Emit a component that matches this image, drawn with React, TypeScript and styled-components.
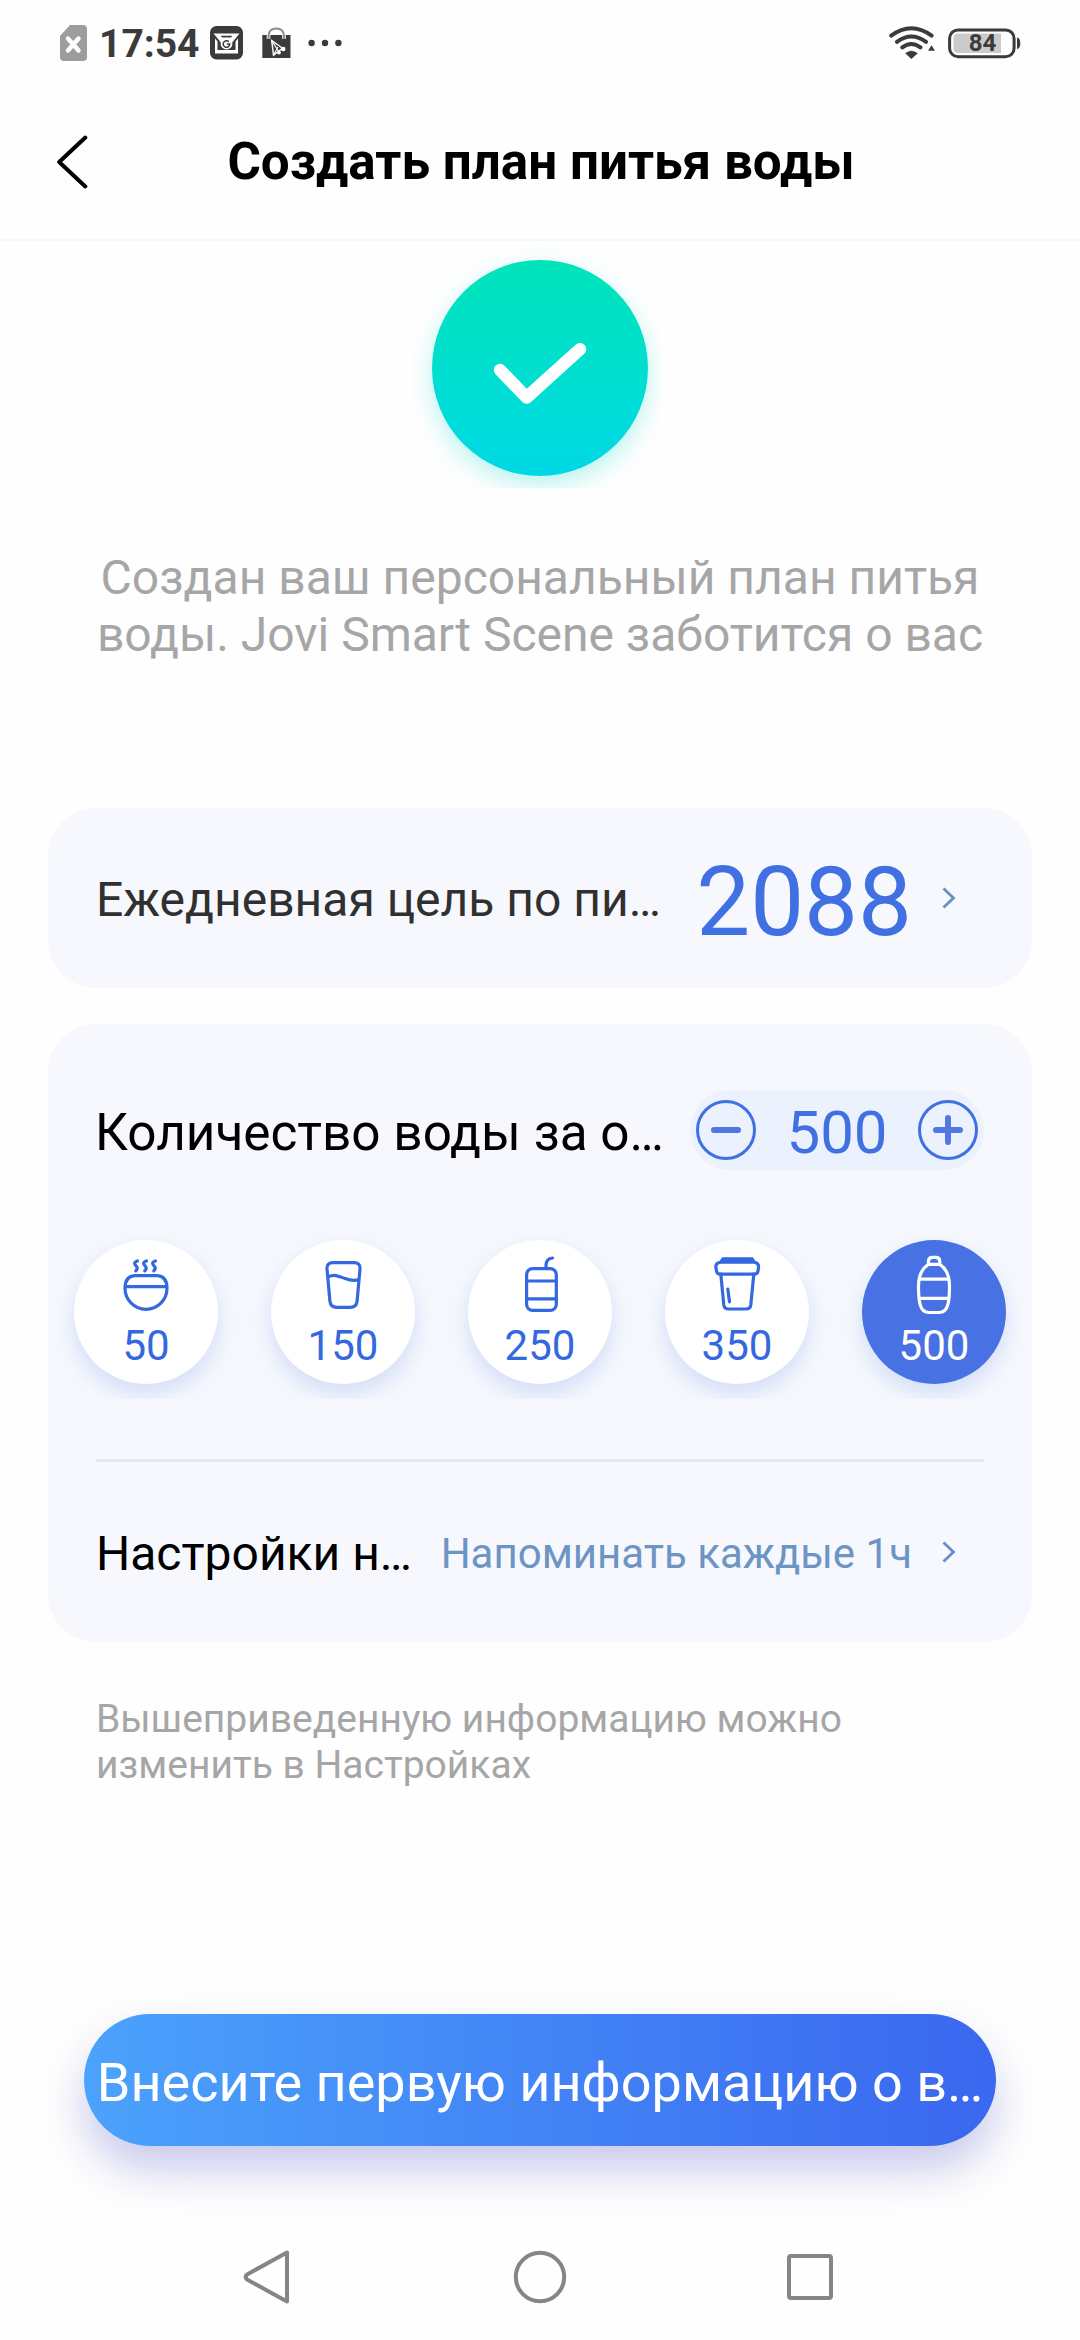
import React from 'react';
import styled, { createGlobalStyle } from 'styled-components';

const GlobalStyle = createGlobalStyle`
  *, *::before, *::after { box-sizing: border-box; }
  body { margin: 0; background: #fefefe; }
  button { font: inherit; border: 0; padding: 0; background: none; color: inherit; }
  svg { display: block; flex: none; }
`;

const blue = '#4070e2';
const ink = '#3b3b3b';

const Screen = styled.div`
  width: 1080px;
  height: 2340px;
  display: flex;
  flex-direction: column;
  overflow: hidden;
  background: #fefefe;
  font-family: Roboto, "Noto Sans", sans-serif;
`;

const StatusBar = styled.div`
  height: 86px;
  padding: 0 59px 0 60px;
  display: flex;
  justify-content: space-between;
  align-items: center;
  color: ${ink};
`;

const StatusGroup = styled.div<{ $gap: number }>`
  display: flex;
  align-items: center;
  gap: ${p => p.$gap}px;
`;

const Clock = styled.span`
  width: 98px;
  font-size: 39px;
  line-height: 44px;
  font-weight: 700;
  margin: 2px 12px 0 11px;
`;

const Header = styled.header`
  height: 155px;
  padding: 0 56px 2px;
  display: grid;
  grid-template-columns: 60px 1fr 60px;
  align-items: center;
  border-bottom: 2px solid #f7f7f7;
`;

const Title = styled.h1`
  margin: 0;
  padding-left: 2px;
  text-align: center;
  font-size: 51.2px;
  line-height: 60px;
  font-weight: 700;
  color: #000;
  white-space: nowrap;
`;

const Hero = styled.section`
  display: flex;
  flex-direction: column;
  align-items: center;
  padding-top: 19px;
  height: 567px;
`;

const Badge = styled.div`
  width: 216px;
  height: 216px;
  border-radius: 50%;
  display: grid;
  place-items: center;
  background: linear-gradient(180deg, #00e4b9, #00dfcf 50%, #00d8e6);
  box-shadow: 0 9px 24px rgba(0, 218, 205, 0.28);
  clip-path: inset(-20px -12px -12px -20px);
`;

const Lead = styled.p`
  margin: 73px 0 0;
  text-align: center;
  font-size: 48px;
  line-height: 57px;
  color: #a6a6a6;
`;

const Cards = styled.main`
  display: flex;
  flex-direction: column;
  gap: 36px;
  padding: 0 48px;
`;

const Card = styled.section`
  border-radius: 48px;
  background: #f6f8fd;
  padding: 0 48px;
`;

const Row = styled.div<{ $height: number; $end?: number }>`
  height: ${p => p.$height}px;
  padding-right: ${p => p.$end ?? 0}px;
  display: flex;
  align-items: center;
  justify-content: space-between;
`;

const Label = styled.span<{ $size?: number; $color?: string; $drop?: number }>`
  font-size: ${p => p.$size ?? 48}px;
  line-height: 60px;
  margin-top: ${p => p.$drop ?? 3}px;
  margin-left: ${p => (p.$size ? -1 : 0)}px;
  color: ${p => p.$color ?? '#000'};
  white-space: nowrap;
`;

const Detail = styled.div<{ $gap: number }>`
  display: flex;
  align-items: center;
  gap: ${p => p.$gap}px;
`;

const Goal = styled.span`
  margin-top: 8px;
  font-size: 96px;
  line-height: 100px;
  color: ${blue};
`;

const Interval = styled.span`
  margin-top: 3px;
  font-size: 42px;
  line-height: 50px;
  color: #6d95c4;
  white-space: nowrap;
`;

const Stepper = styled.div`
  width: 294px;
  height: 80px;
  padding: 0 6px;
  border-radius: 40px;
  background: #ecf2fd;
  display: flex;
  align-items: center;
  justify-content: space-between;
`;

const StepButton = styled.button`
  width: 60px;
  height: 60px;
  border: 3px solid ${blue};
  border-radius: 50%;
  display: grid;
  place-items: center;
`;

const StepValue = styled.span`
  margin-top: 5px;
  font-size: 60px;
  line-height: 70px;
  color: ${blue};
`;

const Sizes = styled.div`
  display: flex;
  justify-content: space-between;
  margin: 4px -22px 0;
`;

const Size = styled.button<{ $active: boolean }>`
  width: 144px;
  height: 144px;
  padding-top: 12px;
  border-radius: 50%;
  display: flex;
  flex-direction: column;
  align-items: center;
  gap: 8px;
  background: ${p => (p.$active ? '#4871e3' : '#fff')};
  color: ${p => (p.$active ? '#fff' : '#3368df')};
  box-shadow: 0 10px 22px rgba(72, 113, 227, 0.2);
  clip-path: inset(-20px -25px -15px -25px);
`;

const SizeValue = styled.span`
  font-size: 42px;
  line-height: 44px;
`;

const Divider = styled.hr`
  height: 3px;
  margin: 75px 0 0;
  border: 0;
  background: #dfebf9;
`;

const Note = styled.p`
  margin: 54px 0 0;
  padding: 0 96px;
  font-size: 39px;
  line-height: 46px;
  color: #a6a6a6;
`;

const Submit = styled.button`
  width: 912px;
  height: 132px;
  margin: auto auto 0;
  padding-top: 5px;
  border-radius: 66px;
  background: linear-gradient(90deg, #4ba2fc, #3a67ef);
  box-shadow: 0 24px 44px rgba(82, 82, 200, 0.3);
  color: #fff;
  font-size: 54px;
  line-height: 64px;
  white-space: nowrap;
`;

const NavBar = styled.nav`
  height: 194px;
  padding: 102px 240px 0;
  display: flex;
  justify-content: space-between;
`;

const Bowl = () => (
  <>
    <path d="M18.5 23.6H41.5Q51 24.3 51 36.3A21 21 0 0 1 9 36.3Q9 24.3 18.5 23.6ZM9 34.7H51" />
    <path d="M21.4 9C17.2 10.5 18.6 12.6 20.2 14C22 16 21 17.6 19.8 18.8M30.4 9C26.2 10.5 27.6 12.6 29.2 14C31 16 30 17.6 28.8 18.8M39.4 9C35.2 10.5 36.6 12.6 38.2 14C40 16 39 17.6 37.8 18.8" />
  </>
);
const Glass = () => (
  <path d="M20 10.7H41Q47.6 10.7 47 17L44.1 49Q43.4 55.3 37.5 55.3H23.5Q17.6 55.3 16.9 49L14 17Q13.4 10.7 20 10.7ZM15 25C22 21.5 27 24.8 32 26.6S41 29.4 46 27.6" />
);
const Can = () => (
  <>
    <rect x="16.6" y="16.6" width="29.7" height="41.8" rx="6" />
    <path d="M16.6 29H46.3M16.6 46.8H46.3M36 16V13.5Q36.2 6.4 42.6 6" />
  </>
);
const Cup = () => (
  <>
    <path d="M15.5 6H45.5L48 10H13Z" fill="currentColor" strokeWidth="1.5" />
    <path d="M14 10.2H46.5Q51.8 10.8 51.6 15L51 19Q50.5 22.2 47 22.2H13.5Q10 22.2 9.5 19L8.8 15Q8.6 10.8 14 10.2Z" />
    <path d="M13.8 22.2L16.8 53Q17.4 57 21.5 57H39Q43.2 57 43.8 53L46.8 22.2M20.8 37L22.5 49.8" />
  </>
);
const Bottle = () => (
  <path d="M24.4 12.4V9.5Q24.4 5.4 28.4 5.4H31.8Q35.8 5.4 35.8 9.5V12.4ZM24.4 12.4C17.2 17 14.5 25 14.5 34C14.5 42 15 48 16 52.2Q18 60.5 25 60.5H35Q42 60.5 44 52.2C45 48 45.5 42 45.5 34C45.5 25 43 17 35.8 12.4M15.4 27.2H44.6M15.2 46.3H44.8" />
);

const sizes = [
  { value: 50, Icon: Bowl },
  { value: 150, Icon: Glass },
  { value: 250, Icon: Can },
  { value: 350, Icon: Cup },
  { value: 500, Icon: Bottle },
];

const Chevron = () => (
  <svg width="14" height="22" viewBox="0 0 14 22" fill="none" stroke="#6291c6" strokeWidth="2.8">
    <path d="M1.5 1.5L11.5 11L1.5 20.5" />
  </svg>
);

const SimIcon = () => (
  <svg width="27" height="36" viewBox="0 0 27 36">
    <path d="M10 0H23Q27 0 27 4V32Q27 36 23 36H4Q0 36 0 32V11Z" fill="#9d9d9d" />
    <path d="M8 13.5L18.5 25.5M18.5 13.5L8 25.5" stroke="#fff" strokeWidth="4.4" strokeLinecap="round" />
  </svg>
);
const MailIcon = () => (
  <svg width="33" height="34" viewBox="0 0 33 34">
    <rect width="33" height="33.5" rx="6.5" fill={ink} />
    <path d="M4 7.5H29L24.5 14H26V24H28V27.5H5V14L4 12Z" fill="none" />
    <path d="M3.5 7.5H29.5L20.5 18.5H12.5Z" fill="#fff" />
    <path d="M5 12.5L7.5 15.5V24H25.5V15.5L28 12.5V27.5H5Z" fill="#fff" />
    <path d="M10.5 9.8H22.5L20.8 11.6H12.2Z" fill={ink} />
    <circle cx="16.5" cy="17.7" r="5.9" fill="#fff" />
    <path d="M18.8 15.6A3.3 3.3 0 1 0 19.8 18H16.8" fill="none" stroke={ink} strokeWidth="1.5" />
  </svg>
);
const BagIcon = () => (
  <svg width="29" height="32" viewBox="0 0 29 32">
    <path d="M0.3 8H28.5V31H0.3Z" fill={ink} />
    <path d="M6.5 12V9Q7 1.6 14.3 1.6T22 9V12" fill="none" stroke="#fff" strokeWidth="3.6" />
    <path d="M6.5 12V9Q7 1.6 14.3 1.6T22 9V12" fill="none" stroke="#8d8d8d" strokeWidth="2" />
    <path d="M9.7 13.5L20.5 21.2L11.5 28.2Z" fill={ink} stroke="#fff" strokeWidth="1.4" />
    <path d="M9.7 13.5L17.5 26M11.5 28.2L16 20" stroke="#fff" strokeWidth="1.2" />
    <circle cx="21.2" cy="22" r="2.3" fill="#fff" />
    <circle cx="17" cy="25.6" r="1.9" fill="#fff" />
  </svg>
);
const MoreIcon = () => (
  <svg width="34" height="8" viewBox="0 0 34 8" fill={ink}>
    <circle cx="3.6" cy="4" r="3.2" /><circle cx="17" cy="4" r="3.2" /><circle cx="30.4" cy="4" r="3.2" />
  </svg>
);
const WifiIcon = () => (
  <svg width="46" height="34" viewBox="0 0 46 34" fill="none" stroke={ink} strokeWidth="4" strokeLinecap="round">
    <path d="M2.2 9.6Q22.3 -5.2 42.6 9.6M8 15.8Q22.3 5.3 37 15.8M13.3 21.4Q22.3 14.6 31.4 21.4" />
    <path d="M16.2 27.3Q22.3 22 28.8 27.3L22.4 33Z" fill={ink} stroke="none" />
    <path d="M39 24.8L42.5 19.2L46 24.8Z" fill={ink} stroke="none" />
  </svg>
);
const BatteryIcon = () => (
  <svg width="73" height="31" viewBox="0 0 73 31">
    <path d="M10 5.5H53V25H10Q5.5 25 5.5 20V10.5Q5.5 5.5 10 5.5Z" fill="#cbcbcb" />
    <rect x="1.6" y="1.9" width="64.5" height="26.8" rx="8.5" fill="none" stroke={ink} strokeWidth="3" />
    <path d="M69 9.5Q72.3 10 72.3 15.2T69 21Z" fill={ink} />
    <text x="34.5" y="23" textAnchor="middle" fontFamily="Roboto, sans-serif" fontWeight="700" fontSize="24" fill={ink}>84</text>
  </svg>
);

export default function App() {
  return (
    <Screen>
      <GlobalStyle />
      <StatusBar>
        <StatusGroup $gap={1}>
          <SimIcon />
          <Clock>17:54</Clock>
          <StatusGroup $gap={17}>
            <StatusGroup $gap={19}>
              <MailIcon />
              <BagIcon />
            </StatusGroup>
            <MoreIcon />
          </StatusGroup>
        </StatusGroup>
        <StatusGroup $gap={13}>
          <WifiIcon />
          <BatteryIcon />
        </StatusGroup>
      </StatusBar>

      <Header>
        <svg width="32" height="54" viewBox="0 0 32 54" fill="none" stroke="#000" strokeWidth="4" strokeLinecap="round" strokeLinejoin="round">
          <path d="M29.3 2.5L3.2 27L29.3 51.5" />
        </svg>
        <Title>Создать план питья воды</Title>
      </Header>

      <Hero>
        <Badge>
          <svg width="216" height="216" viewBox="0 0 216 216" fill="none" stroke="#fff" strokeWidth="12.5" strokeLinecap="round" strokeLinejoin="round">
            <path d="M68 110L94.6 137.5L148 89.2" />
          </svg>
        </Badge>
        <Lead>
          Создан ваш персональный план питья
          <br />
          воды. Jovi Smart Scene заботится о вас
        </Lead>
      </Hero>

      <Cards>
        <Card>
          <Row $height={180} $end={28}>
            <Label $color="#303030">Ежедневная цель по пи…</Label>
            <Detail $gap={30}>
              <Goal>2088</Goal>
              <Chevron />
            </Detail>
          </Row>
        </Card>

        <Card>
          <Row $height={212}>
            <Label $size={51.3} $drop={5}>Количество воды за о…</Label>
            <Stepper>
              <StepButton aria-label="−">
                <svg width="30" height="30" viewBox="0 0 30 30" stroke="#5078e0" strokeWidth="6" strokeLinecap="round">
                  <path d="M3 15H27" />
                </svg>
              </StepButton>
              <StepValue>500</StepValue>
              <StepButton aria-label="+">
                <svg width="30" height="30" viewBox="0 0 30 30" stroke="#5078e0" strokeWidth="6" strokeLinecap="round">
                  <path d="M3 15H27M15 3V27" />
                </svg>
              </StepButton>
            </Stepper>
          </Row>
          <Sizes>
            {sizes.map(({ value, Icon }) => (
              <Size key={value} $active={value === 500}>
                <svg width="60" height="64" viewBox="0 0 60 64" fill="none" stroke="currentColor" strokeWidth="3.2" strokeLinecap="round" strokeLinejoin="round">
                  <Icon />
                </svg>
                <SizeValue>{value}</SizeValue>
              </Size>
            ))}
          </Sizes>
          <Divider />
          <Row $height={180} $end={28}>
            <Label>Настройки н…</Label>
            <Detail $gap={30}>
              <Interval>Напоминать каждые 1ч</Interval>
              <Chevron />
            </Detail>
          </Row>
        </Card>
      </Cards>

      <Note>
        Вышеприведенную информацию можно
        <br />
        изменить в Настройках
      </Note>

      <Submit>Внесите первую информацию о в…</Submit>

      <NavBar>
        <svg width="54" height="58" viewBox="0 0 54 58" fill="none" stroke="#858585" strokeWidth="4" strokeLinejoin="round">
          <path d="M47 4.5V53.5L7 31.5Q4.5 29 7 26.5Z" />
        </svg>
        <svg width="58" height="58" viewBox="0 0 58 58" fill="none" stroke="#858585" strokeWidth="4">
          <circle cx="29" cy="29" r="24.2" />
        </svg>
        <svg width="54" height="58" viewBox="0 0 54 58" fill="none" stroke="#858585" strokeWidth="4">
          <rect x="3" y="8" width="42" height="42" rx="2" />
        </svg>
      </NavBar>
    </Screen>
  );
}
